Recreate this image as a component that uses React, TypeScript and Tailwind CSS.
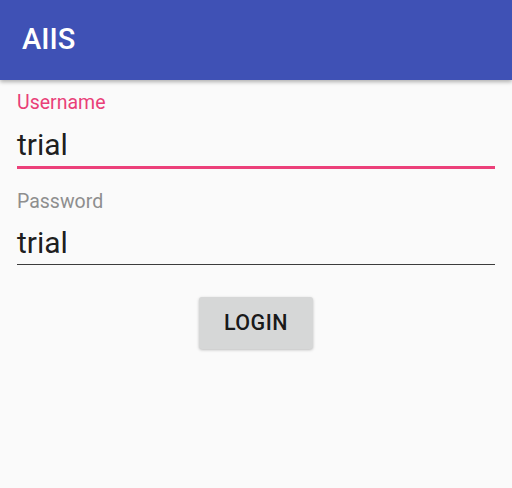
export default function App() {
  return (
    <div className="w-[512px] h-[488px] bg-[#fafafa] flex flex-col" style={{ fontFamily: "Roboto, 'Noto Sans', sans-serif" }}>
      {/* app bar */}
      <div className="h-[80px] bg-[#3f51b5] flex items-center px-[22px] shadow-[0_2px_4px_rgba(0,0,0,0.3)] z-10">
        <span className="text-white text-[29px] font-medium">AIIS</span>
      </div>

      <div className="flex flex-col px-[17px] pt-[12px]">
        {/* username */}
        <label className="text-[#e93f78] text-[19.5px] leading-[22px]">Username</label>
        <div className="mt-[13px] pb-[3px] border-b-[3px] border-[#ec407a]">
          <span className="text-[30px] leading-[36px] text-black/90">trial</span>
        </div>

        {/* password */}
        <label className="mt-[22px] text-[#8e8e8e] text-[19.5px] leading-[22px]">Password</label>
        <div className="mt-[12px] pb-[3px] border-b border-[#3c3c3c]">
          <span className="text-[30px] leading-[36px] text-black/90">trial</span>
        </div>

        <div className="flex justify-center mt-[32px]">
          <button className="w-[114px] h-[52px] bg-[#d6d7d7] rounded-[3px] shadow-[0_1px_3px_rgba(0,0,0,0.25)] text-[21.5px] font-medium tracking-[0.5px] text-black/90">
            LOGIN
          </button>
        </div>
      </div>
    </div>
  );
}
